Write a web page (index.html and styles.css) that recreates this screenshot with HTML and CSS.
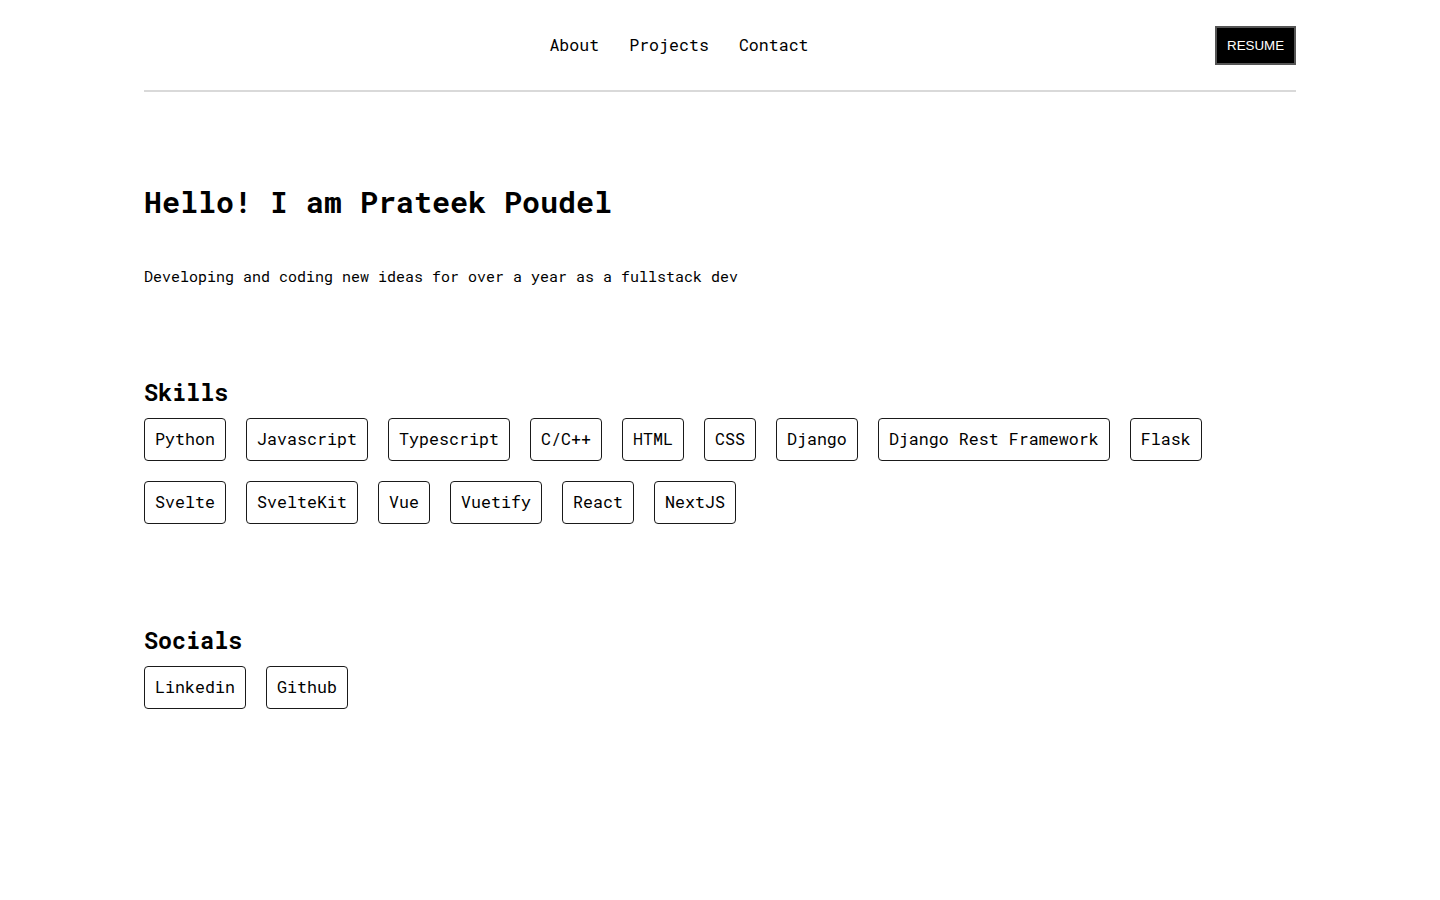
FILE: index.html
```html
<!DOCTYPE html>
<html lang="en">
<head>
<meta charset="utf-8">
<title>Prateek Poudel</title>
<link rel="stylesheet" href="styles.css">
</head>
<body>
<div class="container">
  <header class="header">
    <div class="logo"></div>
    <nav class="nav">
      <a href="#about">About</a>
      <a href="#projects">Projects</a>
      <a href="#contact">Contact</a>
    </nav>
    <button class="resume">RESUME</button>
  </header>
  <main>
    <h1 class="title">Hello! I am Prateek Poudel</h1>
    <p class="intro">Developing and coding new ideas for over a year as a fullstack dev</p>
    <section class="section skills">
      <h2 class="section-title">Skills</h2>
      <ul class="tags">
        <li class="tag">Python</li>
        <li class="tag">Javascript</li>
        <li class="tag">Typescript</li>
        <li class="tag">C/C++</li>
        <li class="tag">HTML</li>
        <li class="tag">CSS</li>
        <li class="tag">Django</li>
        <li class="tag">Django Rest Framework</li>
        <li class="tag">Flask</li>
        <li class="tag">Svelte</li>
        <li class="tag">SvelteKit</li>
        <li class="tag">Vue</li>
        <li class="tag">Vuetify</li>
        <li class="tag">React</li>
        <li class="tag">NextJS</li>
      </ul>
    </section>
    <section class="section socials">
      <h2 class="section-title">Socials</h2>
      <ul class="tags">
        <li class="tag">Linkedin</li>
        <li class="tag">Github</li>
      </ul>
    </section>
  </main>
</div>
</body>
</html>
```

FILE: styles.css
```css
* { box-sizing: border-box; }
html, body { margin: 0; padding: 0; background: #fff; }
body {
  font-family: "Roboto Mono", "DejaVu Sans Mono", "Liberation Mono", monospace;
  color: #000;
}
.container {
  width: 1152px;
  margin: 0 auto;
}
.header {
  height: 92px;
  display: flex;
  align-items: center;
  justify-content: space-between;
  border-bottom: 2px solid #d9d9d9;
  padding-bottom: 1px;
}
.logo { width: 0; }
.nav {
  display: flex;
  gap: 30px;
  margin-left: -1px;
}
.nav a {
  color: #000;
  text-decoration: none;
  font-size: 16.6px;
  line-height: 20px;
}
.resume {
  font-family: "Liberation Sans", Arial, sans-serif;
  font-size: 13.33px;
  line-height: 15px;
  color: #fff;
  background: #000;
  border: 2px solid #555;
  padding: 10px 10px;
  width: 81px;
  height: 39px;
  margin-top: 1px;
}
.title {
  margin: 92px 0 0;
  font-size: 30px;
  line-height: 36px;
  font-weight: 700;
}
.intro {
  margin: 44px 0 0;
  font-size: 15px;
  line-height: 24px;
}
.section-title {
  margin: 0 0 12px;
  font-size: 23.4px;
  line-height: 29px;
  font-weight: 700;
}
.skills { margin-top: 89px; }
.socials { margin-top: 101px; }
.tags {
  list-style: none;
  margin: 0;
  padding: 0;
  display: flex;
  flex-wrap: wrap;
  gap: 20px;
}
.tag {
  border: 1px solid #1a1a1a;
  border-radius: 4px;
  padding: 10px 10px 10px;
  font-size: 16.67px;
  line-height: 20px;
  height: 43px;
  white-space: nowrap;
}
```
